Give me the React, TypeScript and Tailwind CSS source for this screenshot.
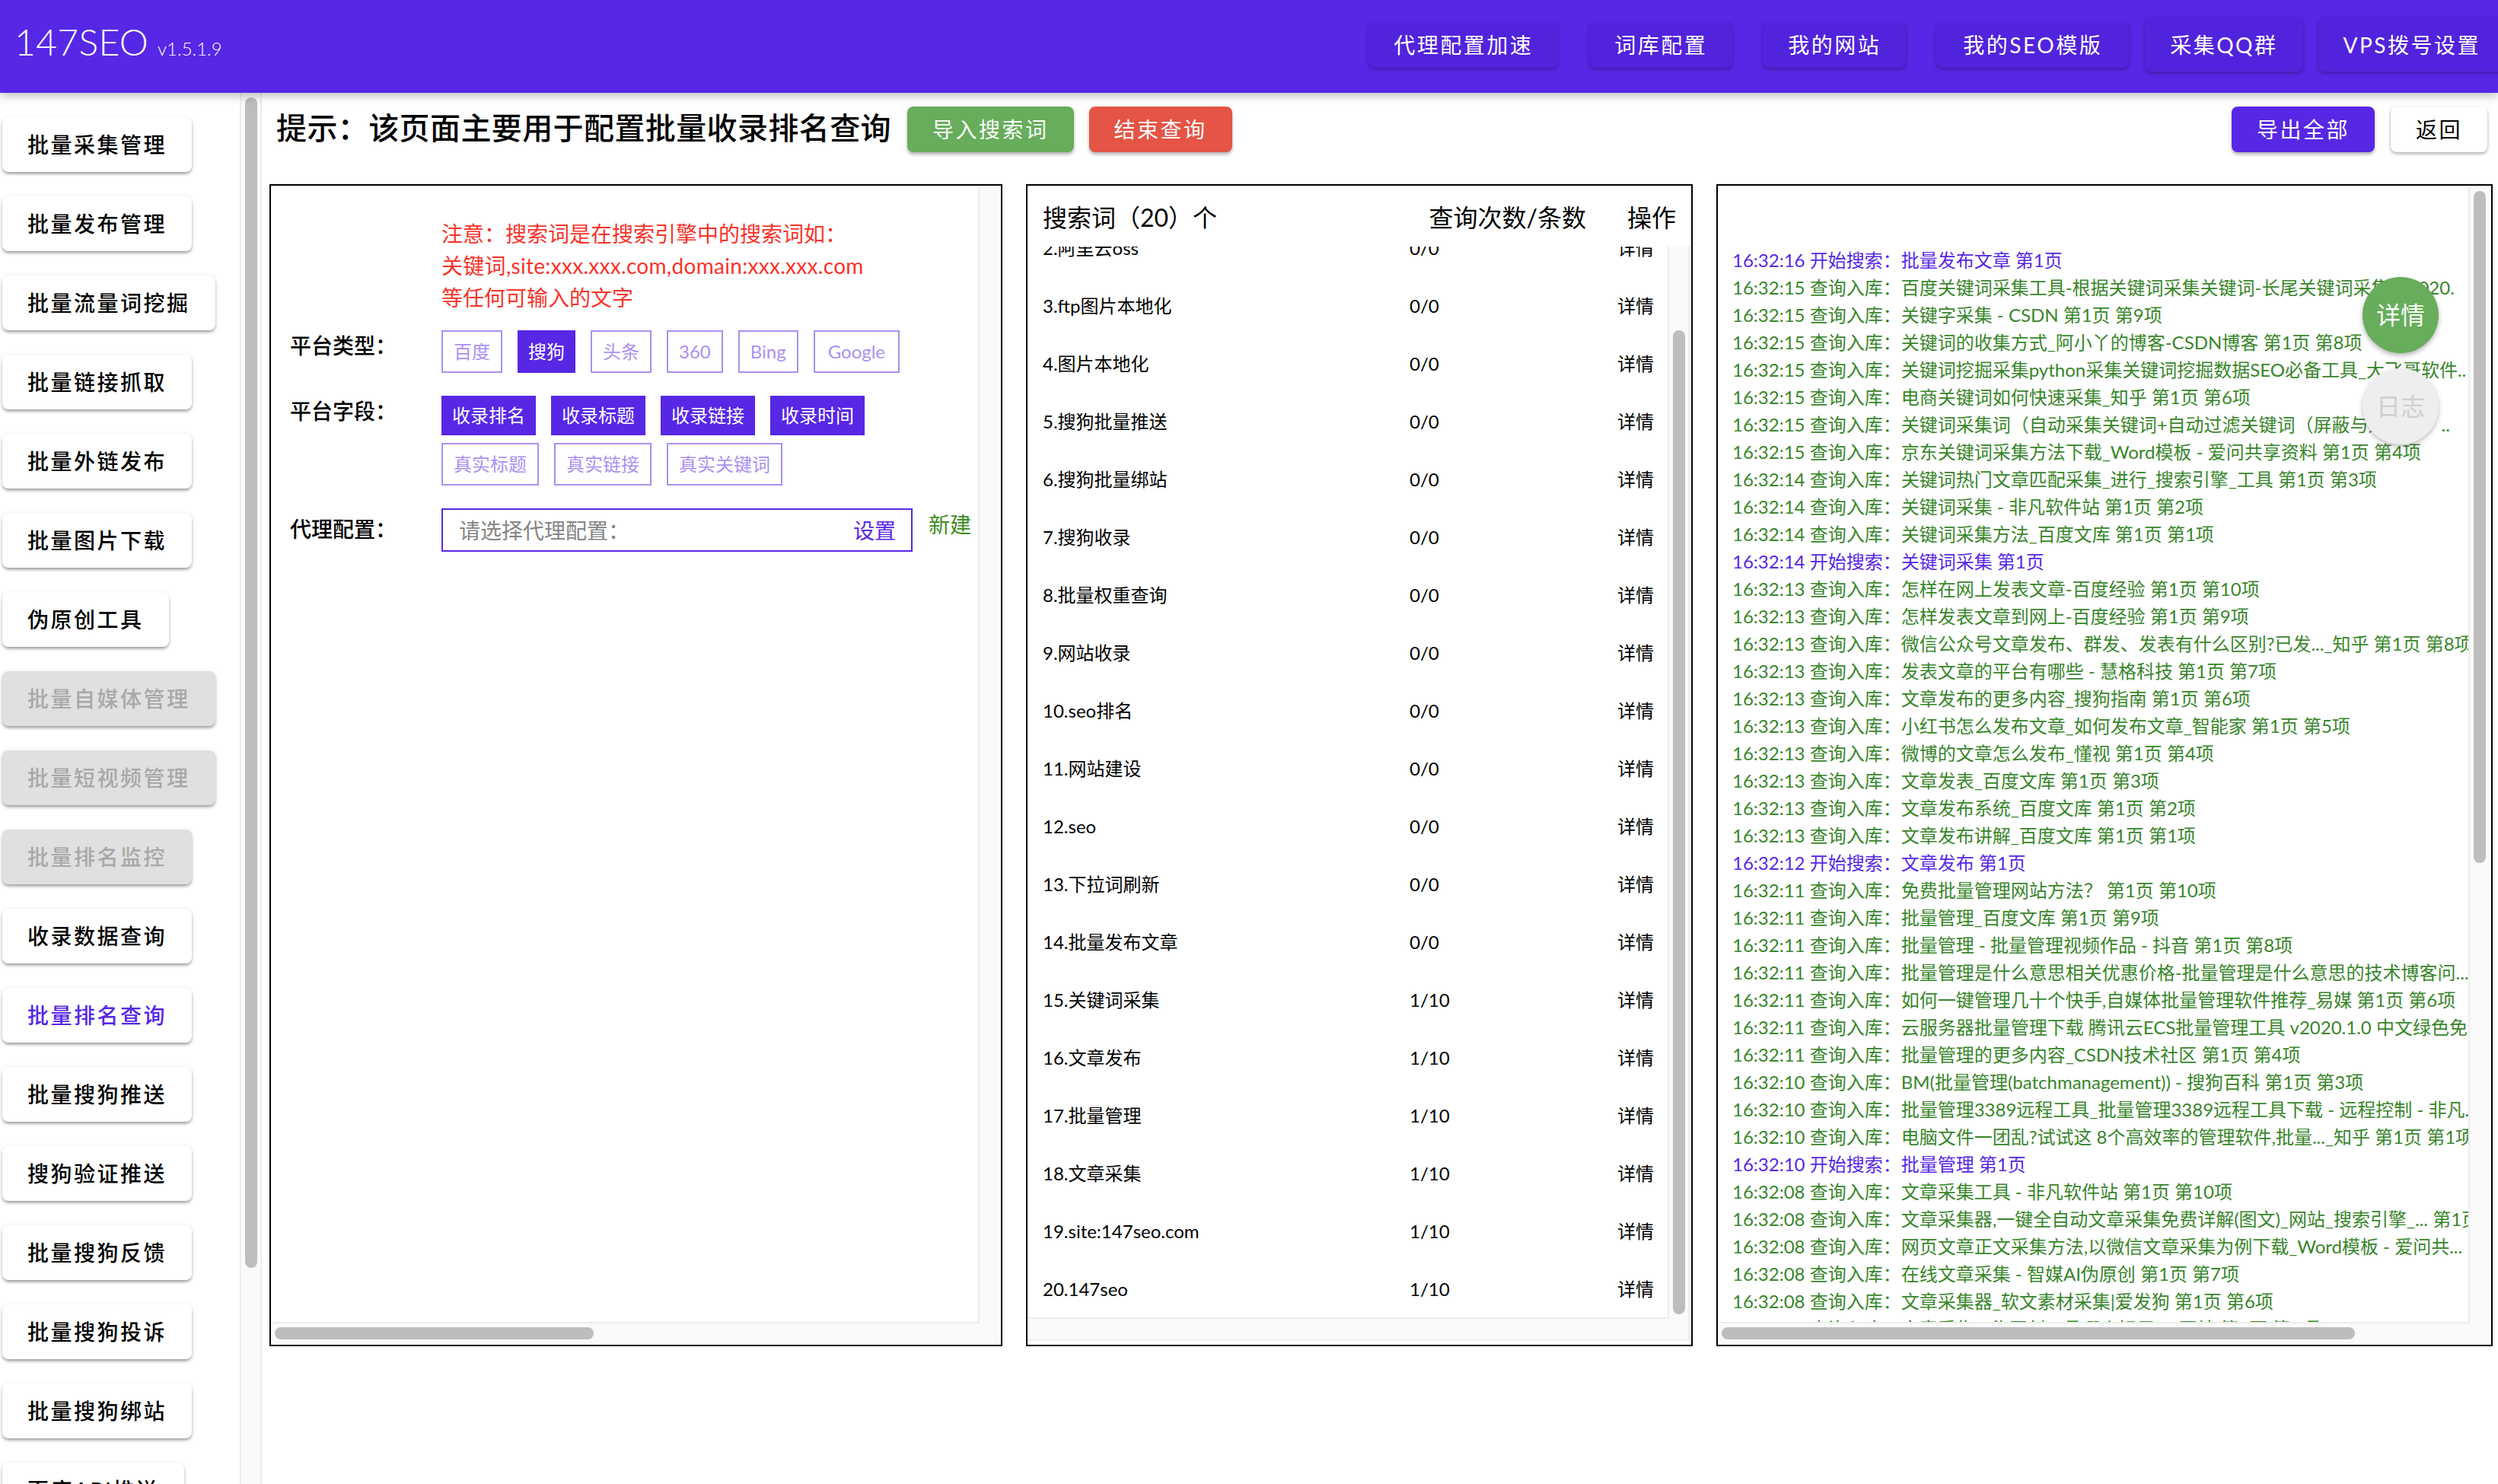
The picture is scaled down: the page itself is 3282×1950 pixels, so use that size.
const navItems = [
  { label: "代理配置加速", cls: "ml-0 px-[33px]" },
  { label: "词库配置", cls: "ml-[41px] px-[33px]" },
  { label: "我的网站", cls: "ml-[40px] px-[33px]" },
  { label: "我的SEO模版", cls: "ml-[40px] px-[35px]" },
];

const sideItems = [
  { label: "批量采集管理" },
  { label: "批量发布管理" },
  { label: "批量流量词挖掘" },
  { label: "批量链接抓取" },
  { label: "批量外链发布" },
  { label: "批量图片下载" },
  { label: "伪原创工具" },
  { label: "批量自媒体管理", off: true },
  { label: "批量短视频管理", off: true },
  { label: "批量排名监控", off: true },
  { label: "收录数据查询" },
  { label: "批量排名查询", on: true },
  { label: "批量搜狗推送" },
  { label: "搜狗验证推送" },
  { label: "批量搜狗反馈" },
  { label: "批量搜狗投诉" },
  { label: "批量搜狗绑站" },
  { label: "百度API推送" },
];

const keywords = [
  ["2.阿里云oss", "0/0"],
  ["3.ftp图片本地化", "0/0"],
  ["4.图片本地化", "0/0"],
  ["5.搜狗批量推送", "0/0"],
  ["6.搜狗批量绑站", "0/0"],
  ["7.搜狗收录", "0/0"],
  ["8.批量权重查询", "0/0"],
  ["9.网站收录", "0/0"],
  ["10.seo排名", "0/0"],
  ["11.网站建设", "0/0"],
  ["12.seo", "0/0"],
  ["13.下拉词刷新", "0/0"],
  ["14.批量发布文章", "0/0"],
  ["15.关键词采集", "1/10"],
  ["16.文章发布", "1/10"],
  ["17.批量管理", "1/10"],
  ["18.文章采集", "1/10"],
  ["19.site:147seo.com", "1/10"],
  ["20.147seo", "1/10"],
];

const S = "开始搜索：";
const Q = "查询入库：";
const logs: [string, string, string][] = [
  ["16:32:16", S, "批量发布文章 第1页"],
  ["16:32:15", Q, "百度关键词采集工具-根据关键词采集关键词-长尾关键词采集软2020."],
  ["16:32:15", Q, "关键字采集 - CSDN 第1页 第9项"],
  ["16:32:15", Q, "关键词的收集方式_阿小丫的博客-CSDN博客 第1页 第8项"],
  ["16:32:15", Q, "关键词挖掘采集python采集关键词挖掘数据SEO必备工具_大飞哥软件.."],
  ["16:32:15", Q, "电商关键词如何快速采集_知乎 第1页 第6项"],
  ["16:32:15", Q, "关键词采集词（自动采集关键词+自动过滤关键词（屏蔽与违禁词）.."],
  ["16:32:15", Q, "京东关键词采集方法下载_Word模板 - 爱问共享资料 第1页 第4项"],
  ["16:32:14", Q, "关键词热门文章匹配采集_进行_搜索引擎_工具 第1页 第3项"],
  ["16:32:14", Q, "关键词采集 - 非凡软件站 第1页 第2项"],
  ["16:32:14", Q, "关键词采集方法_百度文库 第1页 第1项"],
  ["16:32:14", S, "关键词采集 第1页"],
  ["16:32:13", Q, "怎样在网上发表文章-百度经验 第1页 第10项"],
  ["16:32:13", Q, "怎样发表文章到网上-百度经验 第1页 第9项"],
  ["16:32:13", Q, "微信公众号文章发布、群发、发表有什么区别?已发..._知乎 第1页 第8项"],
  ["16:32:13", Q, "发表文章的平台有哪些 - 慧格科技 第1页 第7项"],
  ["16:32:13", Q, "文章发布的更多内容_搜狗指南 第1页 第6项"],
  ["16:32:13", Q, "小红书怎么发布文章_如何发布文章_智能家 第1页 第5项"],
  ["16:32:13", Q, "微博的文章怎么发布_懂视 第1页 第4项"],
  ["16:32:13", Q, "文章发表_百度文库 第1页 第3项"],
  ["16:32:13", Q, "文章发布系统_百度文库 第1页 第2项"],
  ["16:32:13", Q, "文章发布讲解_百度文库 第1页 第1项"],
  ["16:32:12", S, "文章发布 第1页"],
  ["16:32:11", Q, "免费批量管理网站方法？ 第1页 第10项"],
  ["16:32:11", Q, "批量管理_百度文库 第1页 第9项"],
  ["16:32:11", Q, "批量管理 - 批量管理视频作品 - 抖音 第1页 第8项"],
  ["16:32:11", Q, "批量管理是什么意思相关优惠价格-批量管理是什么意思的技术博客问..."],
  ["16:32:11", Q, "如何一键管理几十个快手,自媒体批量管理软件推荐_易媒 第1页 第6项"],
  ["16:32:11", Q, "云服务器批量管理下载 腾讯云ECS批量管理工具 v2020.1.0 中文绿色免."],
  ["16:32:11", Q, "批量管理的更多内容_CSDN技术社区 第1页 第4项"],
  ["16:32:10", Q, "BM(批量管理(batchmanagement)) - 搜狗百科 第1页 第3项"],
  ["16:32:10", Q, "批量管理3389远程工具_批量管理3389远程工具下载 - 远程控制 - 非凡.."],
  ["16:32:10", Q, "电脑文件一团乱?试试这 8个高效率的管理软件,批量..._知乎 第1页 第1项"],
  ["16:32:10", S, "批量管理 第1页"],
  ["16:32:08", Q, "文章采集工具 - 非凡软件站 第1页 第10项"],
  ["16:32:08", Q, "文章采集器,一键全自动文章采集免费详解(图文)_网站_搜索引擎_... 第1页 第9项"],
  ["16:32:08", Q, "网页文章正文采集方法,以微信文章采集为例下载_Word模板 - 爱问共..."],
  ["16:32:08", Q, "在线文章采集 - 智媒AI伪原创 第1页 第7项"],
  ["16:32:08", Q, "文章采集器_软文素材采集|爱发狗 第1页 第6项"],
  ["16:32:08", Q, "文章采集 - 伪原创工具哪个好用? - 网站 第1页 第5项"],
];

function Tag({ label, active, wide }: { label: string; active?: boolean; wide?: boolean }) {
  return (
    <span
      className={
        active
          ? "flex items-center bg-[#5727e6] px-[14px] py-2 text-[24px] leading-[36px] text-white"
          : `flex items-center border-2 border-[#ab8ff2] py-2 text-[24px] leading-[36px] text-[#ab8ff2] ${wide ? "px-[17px]" : "px-[14px]"}`
      }
    >
      {label}
    </span>
  );
}

function BottomBar({ thumb }: { thumb: string }) {
  return (
    <div className="relative h-[28px] shrink-0 bg-[#fafafa]">
      <div className={`absolute top-[5px] left-[5px] h-[16px] rounded-full bg-[#bdbdbd] ${thumb}`} />
    </div>
  );
}

export default function App() {
  return (
    <div className="flex h-screen w-full flex-col overflow-hidden bg-white font-['Lato','Noto_Sans_CJK_SC',sans-serif] text-black">
      <header className="relative z-10 flex h-[122px] shrink-0 bg-[#5727e6] shadow-[0_4px_12px_rgba(0,0,0,0.25)]">
        <div className="flex items-baseline pt-[23px] pl-[19px] text-white">
          <span className="text-[48px] leading-[64px] font-light tracking-[0.3px]">147SEO</span>
          <span className="ml-[12px] text-[24px] font-light">v1.5.1.9</span>
        </div>
        <nav className="ml-auto flex items-start pt-[29px]">
          {navItems.map((n) => (
            <button
              key={n.label}
              className={`h-[60px] rounded-lg bg-[#5223dc] text-[28px] leading-[60px] tracking-[2.5px] text-white shadow-[0_2px_5px_rgba(0,0,0,0.3)] ${n.cls}`}
            >
              {n.label}
            </button>
          ))}
          <button className="-mt-[6px] ml-[21px] h-[71px] rounded-lg bg-[#5223dc] px-[33px] text-[28px] tracking-[2.5px] text-white shadow-[0_2px_5px_rgba(0,0,0,0.3)]">
            采集QQ群
          </button>
          <button className="-mt-[6px] -mr-[10px] ml-[20px] h-[71px] rounded-lg bg-[#5223dc] px-[33px] text-[28px] tracking-[2.5px] whitespace-nowrap text-white shadow-[0_2px_5px_rgba(0,0,0,0.3)]">
            VPS拨号设置
          </button>
        </nav>
      </header>

      <div className="flex min-h-0 flex-1">
        <aside className="flex w-[344px] shrink-0 border-r-2 border-[#ededed]">
          <div className="flex w-[315px] shrink-0 flex-col items-start gap-[32px] overflow-hidden pt-[32px] pl-[3px]">
            {sideItems.map((s) => (
              <button
                key={s.label}
                className={`h-[72px] shrink-0 rounded-lg px-[33px] text-[28px] font-medium tracking-[2.5px] whitespace-nowrap shadow-[0_3px_4px_-1px_rgba(0,0,0,0.4),0_1px_6px_rgba(0,0,0,0.1)] ${
                  s.off ? "bg-[#e0e0e0] text-[#a8a8a8]" : s.on ? "bg-white text-[#5727e6]" : "bg-white text-black"
                }`}
              >
                {s.label}
              </button>
            ))}
          </div>
          <div className="relative flex-1 border-l-2 border-[#ededed] bg-[#fafafa]">
            <div className="absolute top-[6px] left-[5px] h-[1538px] w-[16px] rounded-full bg-[#bdbdbd]" />
          </div>
        </aside>

        <main className="relative min-w-0 flex-1 pl-[10px]">
          <div className="flex h-[120px] items-start pt-[18px]">
            <h1 className="ml-[9px] text-[40px] leading-[56px] font-medium tracking-[0.4px] whitespace-nowrap">
              提示：该页面主要用于配置批量收录排名查询
            </h1>
            <button className="ml-[21px] h-[60px] rounded-lg bg-[#67ad5b] px-[33px] text-[28px] tracking-[2.5px] text-white shadow-[0_3px_4px_rgba(0,0,0,0.3)]">
              导入搜索词
            </button>
            <button className="ml-[20px] h-[60px] rounded-lg bg-[#e55444] px-[33px] text-[28px] tracking-[2.5px] text-white shadow-[0_3px_4px_rgba(0,0,0,0.3)]">
              结束查询
            </button>
            <button className="ml-auto h-[60px] rounded-lg bg-[#5727e6] px-[33px] text-[28px] tracking-[2.5px] text-white shadow-[0_3px_4px_rgba(0,0,0,0.3)]">
              导出全部
            </button>
            <button className="mr-[14px] ml-[21px] h-[60px] rounded-lg bg-white px-[33px] text-[28px] tracking-[2.5px] shadow-[0_2px_4px_rgba(0,0,0,0.35)]">
              返回
            </button>
          </div>

          <div className="flex h-[1527px] gap-[31px]">
            <section className="flex w-[963px] shrink-0 flex-col border-2 border-black">
              <div className="flex min-h-0 flex-1">
                <div className="min-w-0 flex-1 border-b-2 border-[#ededed] pt-[42px] pl-[25px]">
                  <div className="ml-[199px] text-[28px] leading-[42px] whitespace-nowrap text-[#f8332a]">
                    <p>注意：搜索词是在搜索引擎中的搜索词如：</p>
                    <p className="tracking-[0.3px]">关键词,site:xxx.xxx.com,domain:xxx.xxx.com</p>
                    <p>等任何可输入的文字</p>
                  </div>
                  <div className="mt-[22px] flex">
                    <div className="w-[199px] shrink-0 text-[28px] leading-[40px] font-medium">平台类型：</div>
                    <div className="flex gap-[20px]">
                      <Tag label="百度" />
                      <Tag label="搜狗" active />
                      <Tag label="头条" />
                      <Tag label="360" />
                      <Tag label="Bing" />
                      <Tag label="Google" wide />
                    </div>
                  </div>
                  <div className="mt-[30px] flex">
                    <div className="w-[199px] shrink-0 text-[28px] leading-[40px] font-medium">平台字段：</div>
                    <div className="flex flex-col gap-[10px]">
                      <div className="flex gap-[20px]">
                        <Tag label="收录排名" active />
                        <Tag label="收录标题" active />
                        <Tag label="收录链接" active />
                        <Tag label="收录时间" active />
                      </div>
                      <div className="flex gap-[20px]">
                        <Tag label="真实标题" />
                        <Tag label="真实链接" />
                        <Tag label="真实关键词" />
                      </div>
                    </div>
                  </div>
                  <div className="mt-[30px] flex items-start">
                    <div className="w-[199px] shrink-0 text-[28px] leading-[55px] font-medium">代理配置：</div>
                    <div className="flex h-[57px] w-[619px] items-center justify-between border-2 border-[#5727e6] pr-[20px] pl-[21px] text-[28px]">
                      <span className="text-[#858585]">请选择代理配置：</span>
                      <span className="text-[#5727e6]">设置</span>
                    </div>
                    <span className="ml-[21px] text-[28px] leading-[42px] text-[#3b8a22]">新建</span>
                  </div>
                </div>
                <div className="w-[30px] shrink-0 border-l-2 border-[#ededed] bg-[#fafafa]" />
              </div>
              <BottomBar thumb="w-[419px]" />
            </section>

            <section className="flex w-[876px] shrink-0 flex-col border-2 border-black">
              <div className="flex h-[80px] shrink-0 items-center pt-[4px] pl-[20px] text-[32px]">
                <span className="whitespace-nowrap">搜索词（20）个</span>
                <span className="ml-auto whitespace-nowrap">查询次数/条数</span>
                <span className="mr-[20px] ml-[54px] whitespace-nowrap">操作</span>
              </div>
              <div className="flex min-h-0 flex-1">
                <div className="min-w-0 flex-1 overflow-hidden border-b-2 border-[#ededed]">
                  <div className="-mt-[36px] pl-[20px] text-[24px]">
                    {keywords.map(([name, count]) => (
                      <div key={name} className="flex h-[76px] items-center">
                        <span className="w-[482px] shrink-0 whitespace-nowrap">{name}</span>
                        <span className="w-[273px] shrink-0">{count}</span>
                        <span className="whitespace-nowrap">详情</span>
                      </div>
                    ))}
                  </div>
                </div>
                <div className="relative mr-[2px] w-[29px] shrink-0 border-r-2 border-l-2 border-[#ededed] bg-[#fafafa]">
                  <div className="absolute top-[110px] left-[5px] h-[1293px] w-[16px] rounded-full bg-[#bdbdbd]" />
                </div>
              </div>
              <div className="h-[34px] shrink-0 pr-[2px] pb-[5px]">
                <div className="h-full border-r-2 border-b-2 border-[#ededed] bg-[#fafafa]" />
              </div>
            </section>

            <section className="flex w-[1020px] shrink-0 flex-col border-2 border-black">
              <div className="flex min-h-0 flex-1">
                <div className="min-w-0 flex-1 overflow-hidden border-b-2 border-[#ededed] pt-[80px] pl-[19px] text-[24px] leading-[36px]">
                  {logs.map(([time, kind, text], i) => (
                    <p
                      key={i}
                      className={`overflow-hidden whitespace-nowrap ${kind === S ? "text-[#5727e6]" : "text-[#38862a]"}`}
                    >
                      {time} {kind}
                      {text}
                    </p>
                  ))}
                </div>
                <div className="relative w-[30px] shrink-0 border-l-2 border-[#ededed] bg-[#fafafa]">
                  <div className="absolute top-[7px] left-[5px] h-[883px] w-[16px] rounded-full bg-[#bdbdbd]" />
                </div>
              </div>
              <BottomBar thumb="w-[832px]" />
            </section>
          </div>

          <button className="absolute top-[242px] right-[78px] flex h-[100px] w-[100px] items-center justify-center rounded-full bg-[#67ad5b] text-[32px] text-white shadow-[0_3px_6px_rgba(0,0,0,0.3)]">
            详情
          </button>
          <button className="absolute top-[362px] right-[78px] flex h-[100px] w-[100px] items-center justify-center rounded-full bg-[#eeeeee] text-[32px] text-[#cfcfcf] shadow-[0_3px_6px_rgba(0,0,0,0.25)]">
            日志
          </button>
        </main>
      </div>
    </div>
  );
}
